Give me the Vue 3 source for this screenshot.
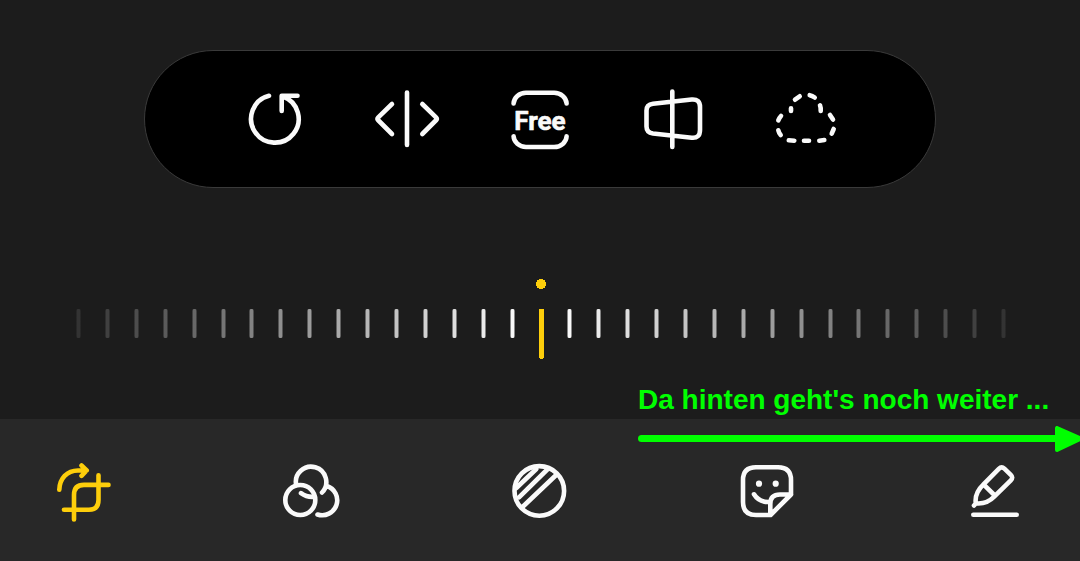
<script setup>
import { ref } from 'vue'

const angle = ref(0)
const reach = 16
const ticks = Array.from({ length: reach * 2 + 1 }, (_, i) => {
  const distance = Math.abs(i - reach)
  return distance === 0 ? 0 : 1.03 - distance * 0.058
})
</script>

<template>
  <main class="editor">
    <div class="tools" role="toolbar" aria-label="Zuschneiden">
      <button type="button" class="tool" aria-label="Drehen">
        <svg viewBox="0 0 72 72" aria-hidden="true">
          <path d="M31 12.800A23.800 23.800 0 1 0 45 13.500M59.500 12.800H43.700V28" />
        </svg>
      </button>
      <button type="button" class="tool" aria-label="Spiegeln">
        <svg viewBox="0 0 72 72" aria-hidden="true">
          <path d="M36 9.500V62M21 21L7 34.600Q6 35.800 7 37L21 51M51.300 21L65.300 34.600Q66.300 35.800 65.300 37L51.300 51" />
        </svg>
      </button>
      <button type="button" class="tool" aria-label="Seitenverhältnis: Free">
        <svg viewBox="0 0 72 72" aria-hidden="true">
          <path d="M9.600 20.500A12.500 11 0 0 1 22 9.800H50A12.500 11 0 0 1 62.600 20.500M9.600 53.300A12.500 11 0 0 0 22 64H50A12.500 11 0 0 0 62.600 53.300" />
          <text x="36" y="47" class="ratio">Free</text>
        </svg>
      </button>
      <button type="button" class="tool" aria-label="Perspektive">
        <svg viewBox="0 0 72 72" aria-hidden="true">
          <path d="M35.300 8.500V64M16 20.700L54.700 16.500Q63 15.800 63 24V47Q63 55.500 54.700 54.700L16 50.500Q9.500 49.600 9.500 43.500V27.500Q9.500 21.400 16 20.700Z" />
        </svg>
      </button>
      <button type="button" class="tool" aria-label="Freihandauswahl">
        <svg viewBox="0 0 72 72" aria-hidden="true">
          <path d="M25 16.700L29.700 13.300M39.700 12.200Q42.300 12.700 44.700 14.500M21 25.300V28M50 22.300Q51 25 50.700 28M11 33Q9.300 34.800 8.300 37.400M8.300 47.300Q8.900 50 10.700 52M18.800 57.300L24.300 57.700M34 57.700H39M49.300 57.700L54.300 57M60 32L63 36.500M63.700 46L61.700 50.700" />
        </svg>
      </button>
    </div>

    <div class="ruler">
      <div class="ticks" aria-hidden="true">
        <span v-for="(opacity, i) in ticks" :key="i" class="tick" :style="{ opacity }"></span>
      </div>
      <input v-model.number="angle" class="angle" type="range" min="-45" max="45" aria-label="Winkel" />
    </div>

    <nav class="modes" aria-label="Bearbeiten">
      <div class="hint">
        <p class="hint-text">Da hinten geht's noch weiter ...</p>
        <svg class="hint-arrow" viewBox="0 0 442 26" aria-hidden="true">
          <path class="shaft" d="M3.500 12.500H422" />
          <path class="head" d="M419 2V24L443 12.500Z" />
        </svg>
      </div>
      <button type="button" class="tool active" aria-label="Zuschneiden und drehen" aria-pressed="true">
        <svg viewBox="0 0 72 72" aria-hidden="true">
          <path d="M11.300 34.700C11.600 23.500 19 15.500 30 15.500H38.500M33.500 10.500L38.700 15.500L33.500 20.800M26 64.500V40Q26 29.900 36 29.900H60.500M16 54.700H41Q50.500 54.700 50.500 45V20.300" />
        </svg>
      </button>
      <button type="button" class="tool" aria-label="Filter">
        <svg viewBox="0 0 72 72" aria-hidden="true">
          <circle cx="24.300" cy="45" r="15" />
          <path d="M20.200 30A15.200 15.200 0 1 1 46 37.500M25 38.200Q31 42.600 38.500 41.800M50.900 31A15 15 0 1 1 41.500 59.500" />
        </svg>
      </button>
      <button type="button" class="tool" aria-label="Farbton">
        <svg viewBox="0 0 72 72" aria-hidden="true">
          <circle cx="35.300" cy="35.900" r="24.800" />
          <path d="M12.300 33L32.300 14M15 42.300L43.300 14.500M19 51.500L52.700 19.500" />
        </svg>
      </button>
      <button type="button" class="tool" aria-label="Sticker">
        <svg viewBox="0 0 72 72" aria-hidden="true">
          <path d="M60 39.500V25Q60 12.200 47 12.200H25Q12 12.200 12 25V47Q12 60 25 60H39.500L60 39.500H49Q39.300 39.500 39.300 49V59.500M23 39.300Q28 47.500 38.800 47" />
          <circle class="dot" cx="28" cy="28.700" r="3.100" />
          <circle class="dot" cx="44.700" cy="28.700" r="3.100" />
        </svg>
      </button>
      <button type="button" class="tool" aria-label="Zeichnen">
        <svg viewBox="0 0 72 72" aria-hidden="true">
          <path d="M14.300 59.800H57.700M15 50.500L17 48.300M24.500 29.300L39.800 13.800Q42.600 11 45.400 13.600L51.800 19.800Q54.600 22.500 51.800 25.300L35.500 41.300Q27.500 49.500 16.800 48.300Q15.300 38 24.500 29.300L35.800 40.500" />
        </svg>
      </button>
    </nav>
  </main>
</template>

<style>
body {
  margin: 0;
  background: #1c1c1c;
}
</style>

<style scoped>
.editor {
  box-sizing: border-box;
  display: flex;
  flex-direction: column;
  min-height: 100vh;
  padding-top: 50px;
  overflow: hidden;
  background: #1c1c1c;
}

.tools {
  display: flex;
  justify-content: space-between;
  margin: 0 144px;
  padding: 32px 93px;
  border: 1px solid #3a3a3a;
  border-radius: 69px;
  background: #000;
}

.tool {
  display: block;
  padding: 0;
  border: 0;
  background: none;
  color: #fafafa;
  cursor: pointer;
}

.tool svg {
  display: block;
  width: 72px;
  height: 72px;
  fill: none;
  stroke: currentColor;
  stroke-width: 4.6;
  stroke-linecap: round;
  stroke-linejoin: round;
}

.tool .ratio {
  fill: currentColor;
  stroke-width: 0.6;
  font: bold 26px Roboto, sans-serif;
  text-anchor: middle;
}

.tool .dot {
  fill: currentColor;
  stroke: none;
}

.tool.active {
  color: #fdce0b;
}

.ruler {
  display: grid;
  margin: 91px 74px 60px 76px;
}

.ticks,
.angle {
  grid-area: 1 / 1;
}

.ticks {
  display: flex;
  justify-content: space-between;
  padding-top: 30px;
}

.tick {
  width: 5px;
  height: 29px;
  border-radius: 2px;
  background: linear-gradient(90deg, #8c8c8c 1px, #fff 1px, #fff 4px, #8c8c8c 4px);
}

.angle {
  width: 100%;
  height: 80px;
  margin: 0;
  appearance: none;
  background: none;
  cursor: pointer;
}

.angle::-webkit-slider-thumb {
  width: 10px;
  height: 80px;
  border: 0;
  appearance: none;
  background:
    radial-gradient(circle at 5px 5px, #fdce0b 5px, transparent 5px),
    linear-gradient(#fdce0b, #fdce0b) 3px 30px / 5px 49px no-repeat,
    linear-gradient(#fdce0b, #fdce0b) 4px 79px / 3px 1px no-repeat;
}

.modes {
  position: relative;
  display: flex;
  flex: 1;
  align-items: flex-start;
  justify-content: space-between;
  padding: 36px 49px 34px 48px;
  background: #282828;
}

.hint {
  position: absolute;
  top: -35px;
  right: 0;
  color: #0f0;
  pointer-events: none;
}

.hint-text {
  margin: 0;
  font: bold 28px/32px "Liberation Sans", Arial, sans-serif;
}

.hint-arrow {
  display: block;
  width: 442px;
  height: 26px;
  margin-top: 10px;
}

.shaft {
  stroke: currentColor;
  stroke-width: 7;
  stroke-linecap: round;
}

.head {
  fill: currentColor;
  stroke: currentColor;
  stroke-width: 4;
  stroke-linejoin: round;
}
</style>
